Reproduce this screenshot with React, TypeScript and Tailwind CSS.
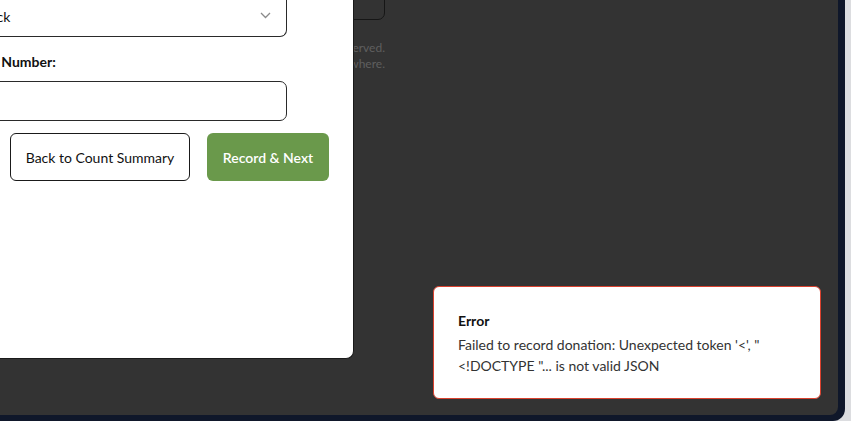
import React from "react";

export default function App() {
  return (
    <div
      className="flex h-[421px] w-[851px] overflow-hidden bg-[#dcdde0]"
      style={{ fontFamily: "Lato, 'Open Sans', sans-serif" }}
    >
      <div className="flex h-full w-[845px] rounded-br-[12px] bg-[#0f172a] pb-[6px] pr-[7px]">
        <div className="relative flex-1 overflow-hidden rounded-br-[8px] bg-[#333333]">
          {/* dimmed page behind the overlay */}
          <div className="flex w-[385px] flex-col items-end">
            <div className="-mt-[30px] h-[50px] w-[300px] rounded-[7px] border border-[#161616]" />
            <div className="mt-[20px] text-right text-[12px] leading-[16px] text-[#5f5f5f]">
              <div>All rights reserved.</div>
              <div>Your data is never shared anywhere.</div>
            </div>
          </div>

          {/* modal */}
          <div className="absolute left-0 top-0 h-[359px] w-[354px] rounded-br-[8px] border-b border-r border-[#1a1a1a] bg-white">
            <div className="-ml-[41px] -mt-[4px] flex flex-col">
              <div className="flex h-[41px] w-[328px] items-center justify-between rounded-b-[7px] border border-t-0 border-[#2a2a2a] pl-[12px] pr-[15px] text-[14px] text-[#111]">
                <span>Check</span>
                <svg width="11" height="7" viewBox="0 0 11 7" className="mb-[1px]">
                  <polyline points="1,1 5.5,5.5 10,1" fill="none" stroke="#8a8a8a" strokeWidth="1.3" />
                </svg>
              </div>
              <label className="mt-[15px] text-[14px] font-bold leading-[20px] text-[#111]">Check Number:</label>
              <div className="mt-[9px] h-[40px] w-[328px] rounded-[7px] border border-[#2a2a2a]" />
              <div className="ml-[51px] mt-[12px] flex gap-[17px]">
                <button className="h-[48px] w-[180px] rounded-[6px] border border-[#1a1a1a] bg-white text-[14px] text-[#111]">
                  Back to Count Summary
                </button>
                <button className="h-[48px] w-[122px] rounded-[6px] bg-[#6a994b] text-[14px] font-semibold text-white">
                  Record &amp; Next
                </button>
              </div>
            </div>
          </div>

          {/* error toast */}
          <div className="absolute bottom-[16px] right-[17px] h-[113px] w-[388px] rounded-[6px] border border-[#d9412e] bg-white px-[24px] pt-[24px]">
            <div className="text-[14px] font-bold leading-[20px] text-[#111]">Error</div>
            <div className="mt-[3px] text-[14px] leading-[21px] text-[#333]">
              Failed to record donation: Unexpected token '&lt;', "
              <br />
              &lt;!DOCTYPE "... is not valid JSON
            </div>
          </div>
        </div>
      </div>
    </div>
  );
}
